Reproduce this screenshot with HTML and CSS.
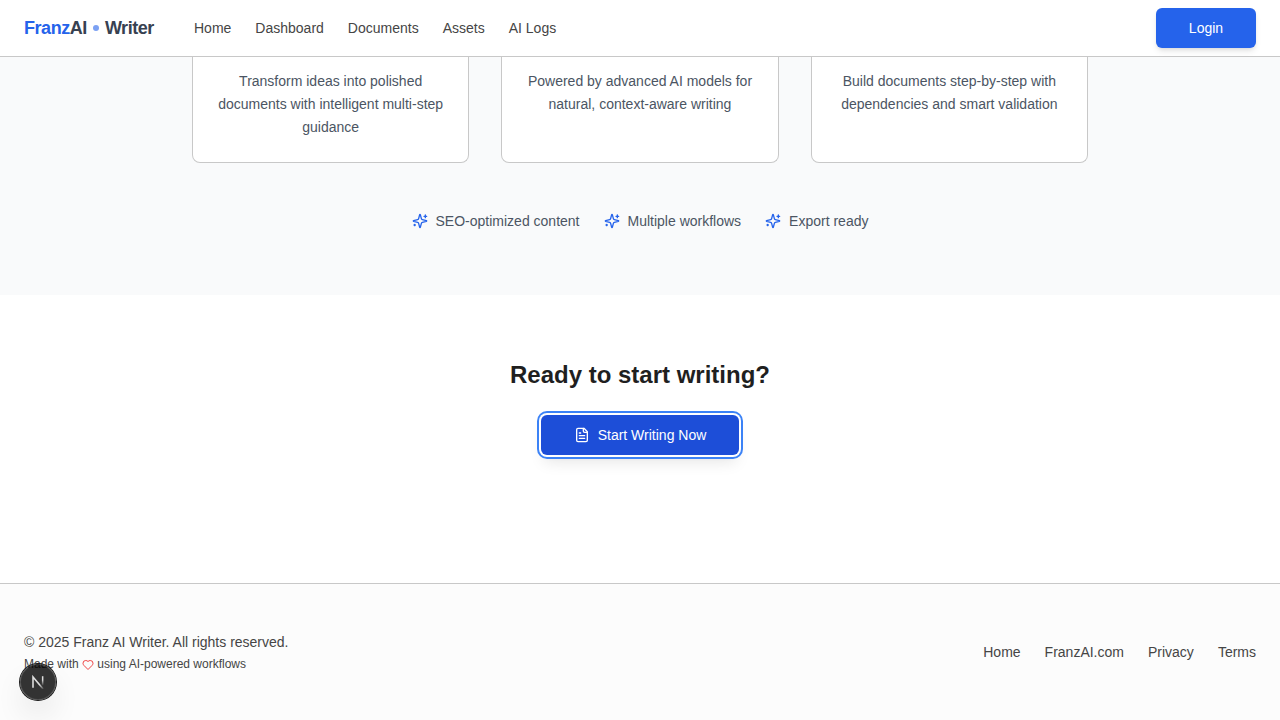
FILE: index.html
```html
<!DOCTYPE html>
<html lang="en">
<head>
<meta charset="utf-8">
<title>Franz AI Writer</title>
<link rel="stylesheet" href="styles.css">
</head>
<body>
<svg class="defs" width="0" height="0">
  <symbol id="sparkles" viewBox="0 0 24 24">
    <path d="M9.937 15.5A2 2 0 0 0 8.5 14.063l-6.135-1.582a.5.5 0 0 1 0-.962L8.5 9.936A2 2 0 0 0 9.937 8.5l1.582-6.135a.5.5 0 0 1 .963 0L14.063 8.5A2 2 0 0 0 15.5 9.937l6.135 1.581a.5.5 0 0 1 0 .964L15.5 14.063a2 2 0 0 0-1.437 1.437l-1.582 6.135a.5.5 0 0 1-.963 0z"/>
    <path d="M20 3v4M22 5h-4M4 17v2M5 18H3"/>
  </symbol>
</svg>
<header class="header">
  <a class="logo"><span class="logo-blue">Franz</span><span>AI</span><i class="logo-dot"></i><span>Writer</span></a>
  <nav class="nav"><a>Home</a><a>Dashboard</a><a>Documents</a><a>Assets</a><a>AI Logs</a></nav>
  <button class="btn login">Login</button>
</header>
<main>
  <section class="features">
    <div class="cards">
      <div class="card"><p>Transform ideas into polished documents with intelligent multi-step guidance</p></div>
      <div class="card"><p>Powered by advanced AI models for natural, context-aware writing</p></div>
      <div class="card"><p>Build documents step-by-step with dependencies and smart validation</p></div>
    </div>
    <div class="perks">
      <div class="perk"><svg class="icon spark"><use href="#sparkles"/></svg><span>SEO-optimized content</span></div>
      <div class="perk"><svg class="icon spark"><use href="#sparkles"/></svg><span>Multiple workflows</span></div>
      <div class="perk"><svg class="icon spark"><use href="#sparkles"/></svg><span>Export ready</span></div>
    </div>
  </section>
  <section class="cta">
    <h2>Ready to start writing?</h2>
    <button class="btn start">
      <svg class="icon" viewBox="0 0 24 24"><path d="M15 2H6a2 2 0 0 0-2 2v16a2 2 0 0 0 2 2h12a2 2 0 0 0 2-2V7Z"/><path d="M14 2v4a2 2 0 0 0 2 2h4M10 9H8M16 13H8M16 17H8"/></svg>
      <span>Start Writing Now</span>
    </button>
  </section>
</main>
<footer class="footer">
  <div class="legal">
    <p class="copyright">© 2025 Franz AI Writer. All rights reserved.</p>
    <p class="made"><span>Made with</span><svg class="heart" viewBox="0 0 24 24"><path d="M19 14c1.49-1.46 3-3.21 3-5.5A5.5 5.5 0 0 0 16.500 3c-1.760 0-3 .5-4.500 2-1.500-1.500-2.740-2-4.500-2A5.500 5.500 0 0 0 2 8.500c0 2.300 1.500 4.050 3 5.500l7 7Z"/></svg><span>using AI-powered workflows</span></p>
  </div>
  <nav class="footer-nav"><a>Home</a><a>FranzAI.com</a><a>Privacy</a><a>Terms</a></nav>
</footer>
<div class="dev-badge">
  <svg width="14" height="14" viewBox="0 0 14 14" fill="none">
    <defs>
      <linearGradient id="stem" x1="0" y1="0" x2="0" y2="1"><stop offset=".4" stop-color="#ddd"/><stop offset="1" stop-color="#ddd" stop-opacity="0"/></linearGradient>
      <linearGradient id="diag" gradientUnits="userSpaceOnUse" x1="7" y1="7" x2="13" y2="14.500"><stop offset=".3" stop-color="#ddd"/><stop offset="1" stop-color="#ddd" stop-opacity="0"/></linearGradient>
    </defs>
    <path d="M2 12.800V2L12.200 14" stroke="url(#diag)" stroke-width="1.600"/>
    <rect x="10.900" y="1.200" width="1.500" height="9.500" fill="url(#stem)"/>
  </svg>
</div>
</body>
</html>
```
FILE: styles.css
```css
* { box-sizing: border-box; }
body {
  margin: 0;
  height: 720px;
  overflow: hidden;
  background: #fff;
  color: #454545;
  font: 14px/20px "Liberation Sans", Arial, sans-serif;
}
p, h2 { margin: 0; }
.defs { position: absolute; }
.header {
  display: flex;
  align-items: center;
  height: 57px;
  padding: 0 24px;
  border-bottom: 1px solid #c8c8c8;
  background: #fff;
}
.logo {
  display: flex;
  align-items: center;
  width: 130px;
  margin-right: 40px;
  color: #374151;
  font-size: 18px;
  font-weight: 700;
  line-height: 28px;
  letter-spacing: -0.45px;
}
.logo-blue { color: #2563eb; }
.logo-dot {
  width: 6px;
  height: 6px;
  margin: 0 6px;
  border-radius: 50%;
  background: #7ca1f3;
}
.nav, .footer-nav { display: flex; gap: 24px; }
.btn {
  display: flex;
  align-items: center;
  justify-content: center;
  gap: 8px;
  height: 40px;
  padding: 0 32px;
  border: 0;
  border-radius: 6px;
  color: #fff;
  font: inherit;
}
.login {
  width: 100px;
  margin-left: auto;
  background: #2563eb;
  box-shadow: 0 4px 6px -1px rgba(0, 0, 0, .1), 0 2px 4px -2px rgba(0, 0, 0, .1);
}
.icon {
  width: 16px;
  height: 16px;
  flex: none;
  fill: none;
  stroke: currentColor;
  stroke-width: 2;
  stroke-linecap: round;
  stroke-linejoin: round;
}
.features {
  height: 238px;
  background: #f9fafb;
  color: #4b5563;
}
.cards {
  display: grid;
  grid-template-columns: repeat(3, 1fr);
  gap: 32px;
  width: 896px;
  height: 106px;
  margin: 0 auto 48px;
}
.card {
  padding: 13px 24px 0;
  border: 1px solid #c8c8c8;
  border-top: 0;
  border-radius: 0 0 8px 8px;
  background: #fff;
  text-align: center;
  line-height: 23px;
}
.perks { display: flex; justify-content: center; gap: 24px; }
.perk { display: flex; align-items: center; gap: 8px; }
.spark { color: #2563eb; }
.cta {
  display: flex;
  flex-direction: column;
  align-items: center;
  gap: 24px;
  height: 288px;
  padding-top: 64px;
}
.cta h2 {
  color: #1f1f1f;
  font-size: 24px;
  line-height: 32px;
}
.start {
  width: 198px;
  background: #1d4ed8;
  box-shadow: 0 0 0 2px #fff, 0 0 0 4px #3b82f6, 0 10px 15px -3px rgba(0, 0, 0, .1), 0 4px 6px -4px rgba(0, 0, 0, .1);
}
.footer {
  display: flex;
  align-items: center;
  justify-content: space-between;
  height: 137px;
  padding: 0 24px;
  border-top: 1px solid #c8c8c8;
  background: #fcfcfc;
}
.legal { display: grid; gap: 4px; }
.made {
  display: flex;
  align-items: center;
  gap: 3.3px;
  font-size: 12px;
  line-height: 16px;
}
.heart {
  width: 12px;
  height: 12px;
  margin-top: 2px;
  fill: none;
  stroke: #ef4444;
  stroke-width: 2;
  stroke-linejoin: round;
}
.dev-badge {
  position: absolute;
  left: 20px;
  top: 664px;
  display: grid;
  place-items: center;
  width: 36px;
  height: 36px;
  border-radius: 50%;
  background: rgba(0, 0, 0, .8);
  box-shadow: 0 0 0 1px #171717, inset 0 0 0 1px rgba(255, 255, 255, .14), 0 16px 32px -8px rgba(0, 0, 0, .24);
}
```
